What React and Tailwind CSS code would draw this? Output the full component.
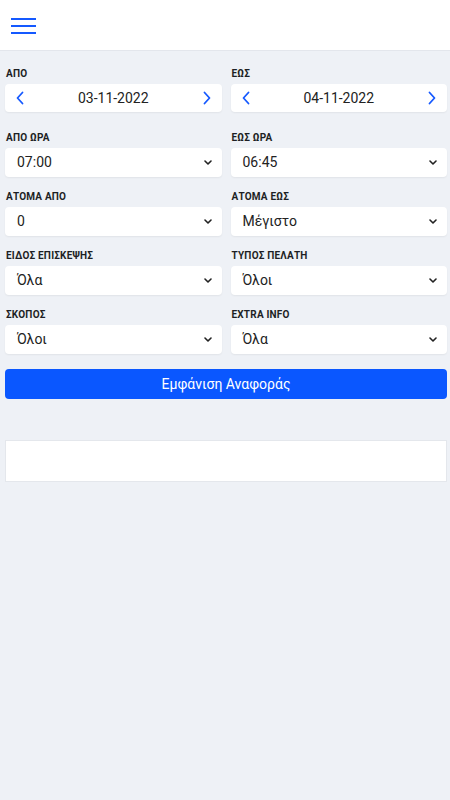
import React from 'react';

const font = { fontFamily: 'Roboto, "Noto Sans", sans-serif' };

function ChevronLeft() {
  return (
    <svg width="10" height="14" viewBox="0 0 10 14" fill="none" stroke="#1559ff" strokeWidth="1.8" strokeLinecap="round" strokeLinejoin="round">
      <path d="M7.5 1.5 2.5 7l5 5.5" />
    </svg>
  );
}

function ChevronRight() {
  return (
    <svg width="10" height="14" viewBox="0 0 10 14" fill="none" stroke="#1559ff" strokeWidth="1.8" strokeLinecap="round" strokeLinejoin="round">
      <path d="M2.5 1.5 7.5 7l-5 5.5" />
    </svg>
  );
}

function Caret() {
  return (
    <svg width="8" height="5" viewBox="0 0 8 5" fill="none" stroke="#222" strokeWidth="1.6" strokeLinecap="round" strokeLinejoin="round">
      <path d="M1 1 4 4l3-3" />
    </svg>
  );
}

function Label({ children }) {
  return <div className="text-[10px] leading-[12px] font-bold text-[#1d1f24] tracking-[0.2px] mb-[4px] pl-[1px]">{children}</div>;
}

function DateField({ label, value }) {
  return (
    <div>
      <Label>{label}</Label>
      <div className="h-[28px] bg-white rounded-[4px] shadow-[0_1px_2px_rgba(0,0,0,0.06)] flex items-center justify-between px-[10px]">
        <ChevronLeft />
        <span className="text-[14px] text-[#222]">{value}</span>
        <ChevronRight />
      </div>
    </div>
  );
}

function SelectField({ label, value }) {
  return (
    <div>
      <Label>{label}</Label>
      <div className="h-[29px] bg-white rounded-[4px] shadow-[0_1px_2px_rgba(0,0,0,0.06)] flex items-center justify-between pl-[12px] pr-[10px]">
        <span className="text-[14px] text-[#222]">{value}</span>
        <Caret />
      </div>
    </div>
  );
}

export default function App() {
  const rows = [
    ['ΑΠΟ ΩΡΑ', '07:00', 'ΕΩΣ ΩΡΑ', '06:45'],
    ['ΑΤΟΜΑ ΑΠΟ', '0', 'ΑΤΟΜΑ ΕΩΣ', 'Μέγιστο'],
    ['ΕΙΔΟΣ ΕΠΙΣΚΕΨΗΣ', 'Όλα', 'ΤΥΠΟΣ ΠΕΛΑΤΗ', 'Όλοι'],
    ['ΣΚΟΠΟΣ', 'Όλοι', 'EXTRA INFO', 'Όλα'],
  ];

  return (
    <div className="min-h-[800px] bg-[#eef1f6]" style={font}>
      <header className="h-[51px] bg-white border-b border-[#e3e6ec] flex items-center pl-[11px]">
        <div className="flex flex-col gap-[5px] pt-[1px]">
          <span className="block w-[25px] h-[2px] bg-[#1559ff]" />
          <span className="block w-[25px] h-[2px] bg-[#1559ff]" />
          <span className="block w-[25px] h-[2px] bg-[#1559ff]" />
        </div>
      </header>

      <main className="pl-[5px] pr-[3px] pt-[17px]">
        <div className="grid grid-cols-2 gap-x-[9px]">
          <DateField label="ΑΠΟ" value="03-11-2022" />
          <DateField label="ΕΩΣ" value="04-11-2022" />
        </div>

        <div className="grid grid-cols-2 gap-x-[9px] gap-y-[14px] mt-[20px]">
          {rows.map(([l1, v1, l2, v2]) => (
            <React.Fragment key={l1}>
              <SelectField label={l1} value={v1} />
              <SelectField label={l2} value={v2} />
            </React.Fragment>
          ))}
        </div>

        <button className="mt-[15px] w-full h-[30px] rounded-[4px] bg-[#0a57ff] text-white text-[14px] flex items-center justify-center">
          Εμφάνιση Αναφοράς
        </button>

        <div className="mt-[41px] h-[42px] bg-white border border-[#e4e7ec]" />
      </main>
    </div>
  );
}
